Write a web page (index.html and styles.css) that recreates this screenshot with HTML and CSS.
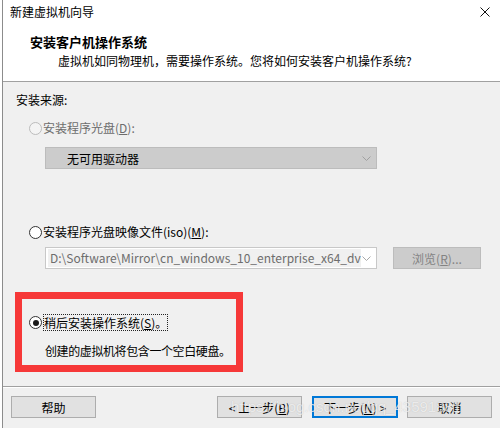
FILE: index.html
```html
<!DOCTYPE html>
<html lang="zh-CN">
<head>
    <meta charset="UTF-8">
    <title>新建虚拟机向导</title>
    <link rel="stylesheet" href="styles.css">
</head>
<body>
    <div class="window">
        <div class="titlebar">
            <span class="title">新建虚拟机向导</span>
            <svg class="close" width="10" height="10" viewBox="0 0 10 10">
                <path d="M0.5 0.5 L9.5 9.5 M9.5 0.5 L0.5 9.5" stroke="#111" stroke-width="1"/>
            </svg>
        </div>

        <div class="header">
            <div class="heading">安装客户机操作系统</div>
            <div class="subheading">虚拟机如同物理机，需要操作系统。您将如何安装客户机操作系统?</div>
        </div>

        <div class="content">
            <div class="group-label">安装来源:</div>

            <div class="radio-row disabled row-disc">
                <span class="radio"></span>
                <span>安装程序光盘(<u>D</u>):</span>
            </div>
            <div class="select disabled-select">
                <span class="select-text">无可用驱动器</span>
                <svg class="chevron" width="9" height="5" viewBox="0 0 9 5">
                    <path d="M0.5 0.5 L4.5 4.5 L8.5 0.5" fill="none" stroke="#a0a0a0"/>
                </svg>
            </div>

            <div class="radio-row row-iso">
                <span class="radio"></span>
                <span>安装程序光盘映像文件(iso)(<u>M</u>):</span>
            </div>
            <div class="iso-row">
                <div class="select iso-select">
                    <span class="select-text path">D:\Software\Mirror\cn_windows_10_enterprise_x64_dvd</span>
                    <svg class="chevron" width="9" height="5" viewBox="0 0 9 5">
                        <path d="M0.5 0.5 L4.5 4.5 L8.5 0.5" fill="none" stroke="#a8a8a8"/>
                    </svg>
                </div>
                <button class="btn browse" disabled>浏览(<u>R</u>)...</button>
            </div>

            <div class="highlight">
                <div class="radio-row">
                    <span class="radio checked"></span>
                    <span class="focus">稍后安装操作系统(<u>S</u>)。</span>
                </div>
                <div class="note">创建的虚拟机将包含一个空白硬盘。</div>
            </div>
        </div>

        <div class="footer">
            <button class="btn">帮助</button>
            <div class="nav">
                <button class="btn back">&lt; 上一步(<u>B</u>)</button>
                <button class="btn primary">下一步(<u>N</u>) &gt;</button>
                <button class="btn">取消</button>
            </div>
            <span class="watermark">https://blog.csdn.net/qq_43591881</span>
        </div>
    </div>
</body>
</html>
```

FILE: styles.css
```css
body {
    margin: 0;
    background-color: #fff;
    font-family: "Noto Sans CJK SC", "Microsoft YaHei", sans-serif;
    font-size: 12px;
    color: #000;
}

.window {
    margin-left: 2px;
    width: 498px;
    height: 428px;
    border-left: 1px solid #8c8c8c;
    display: flex;
    flex-direction: column;
    overflow: hidden;
}

.titlebar {
    height: 24px;
    display: flex;
    align-items: center;
    justify-content: space-between;
    padding: 0 11px 0 7px;
    line-height: 16px;
}

.header {
    height: 58px;
    padding: 10px 0 0 27px;
    box-sizing: border-box;
    border-bottom: 1px solid #a0a0a0;
}

.heading {
    font-size: 13px;
    font-weight: bold;
    line-height: 16px;
}

.subheading {
    margin: 3px 0 0 28px;
    line-height: 16px;
}

.content {
    height: 305px;
    background-color: #f0f0f0;
    padding: 10px 0 0 13px;
    box-sizing: border-box;
    border-bottom: 1px solid #a0a0a0;
}

.group-label {
    line-height: 16px;
}

.radio-row {
    display: flex;
    align-items: center;
    gap: 1px;
    margin-left: 13px;
    line-height: 16px;
    white-space: nowrap;
}

.row-disc {
    margin-top: 12px;
}

.row-iso {
    margin-top: 55px;
}

.radio-row.disabled {
    color: #6d6d6d;
}

.radio {
    width: 11px;
    height: 11px;
    border: 1px solid #333;
    border-radius: 50%;
    background-color: #fff;
    position: relative;
}

.disabled .radio {
    border-color: #bcbcbc;
    background-color: #f4f4f4;
}

.radio.checked::after {
    content: "";
    position: absolute;
    left: 2.5px;
    top: 2.5px;
    width: 6px;
    height: 6px;
    border-radius: 50%;
    background-color: #1a1a1a;
}

.select {
    width: 332px;
    height: 22px;
    box-sizing: border-box;
    display: flex;
    align-items: center;
    justify-content: space-between;
    padding: 0 5px 0 3px;
}

.disabled-select {
    margin: 11px 0 0 29px;
    background-color: #cccccc;
    border: 1px solid #bcbcbc;
}

.disabled-select .select-text {
    padding-left: 18px;
}

.iso-row {
    display: flex;
    align-items: center;
    gap: 16px;
    margin: 7px 0 0 29px;
}

.iso-select {
    background-color: #fff;
    border: 1px solid #c8c8c8;
    padding-left: 2px;
}

.path {
    background-color: #f0f0f0;
    color: #6d6d6d;
    width: 311px;
    overflow: hidden;
    white-space: nowrap;
    line-height: 18px;
    padding-left: 2px;
}

.btn {
    font-family: inherit;
    font-size: 12px;
    width: 85px;
    height: 22px;
    padding: 0;
    background-color: #e1e1e1;
    border: 1px solid #adadad;
    color: #000;
    white-space: nowrap;
}

.browse {
    width: 88px;
    background-color: #cccccc;
    border-color: #bcbcbc;
    color: #838383;
}

.highlight {
    width: 228px;
    box-sizing: border-box;
    margin: 23px 0 0 -1px;
    border: 7px solid #f63838;
    padding: 15px 0 6px 0;
}

.highlight .radio-row {
    margin-left: 7px;
}

.focus {
    border: 1px dotted #222;
    line-height: 15px;
}

.note {
    margin: 12px 0 0 23px;
    line-height: 16px;
    white-space: nowrap;
    letter-spacing: -0.4px;
}

.footer {
    flex: 1;
    background-color: #f0f0f0;
    border-top: 1px solid #fff;
    display: flex;
    justify-content: space-between;
    align-items: flex-start;
    padding: 8px 9px 0 8px;
    position: relative;
}

.nav {
    display: flex;
    gap: 9px;
}

.btn.back {
    width: 85px;
    margin-right: 1px;
}

.btn.primary {
    width: 86px;
    border: 2px solid #0078d7;
}

.watermark {
    position: absolute;
    left: 228px;
    top: 10px;
    font-family: Arial, "Liberation Sans", sans-serif;
    font-size: 15px;
    color: rgba(255, 255, 255, 0.7);
    text-shadow: 0 0 1px rgba(110, 110, 110, 0.35);
    pointer-events: none;
    white-space: nowrap;
}
```
